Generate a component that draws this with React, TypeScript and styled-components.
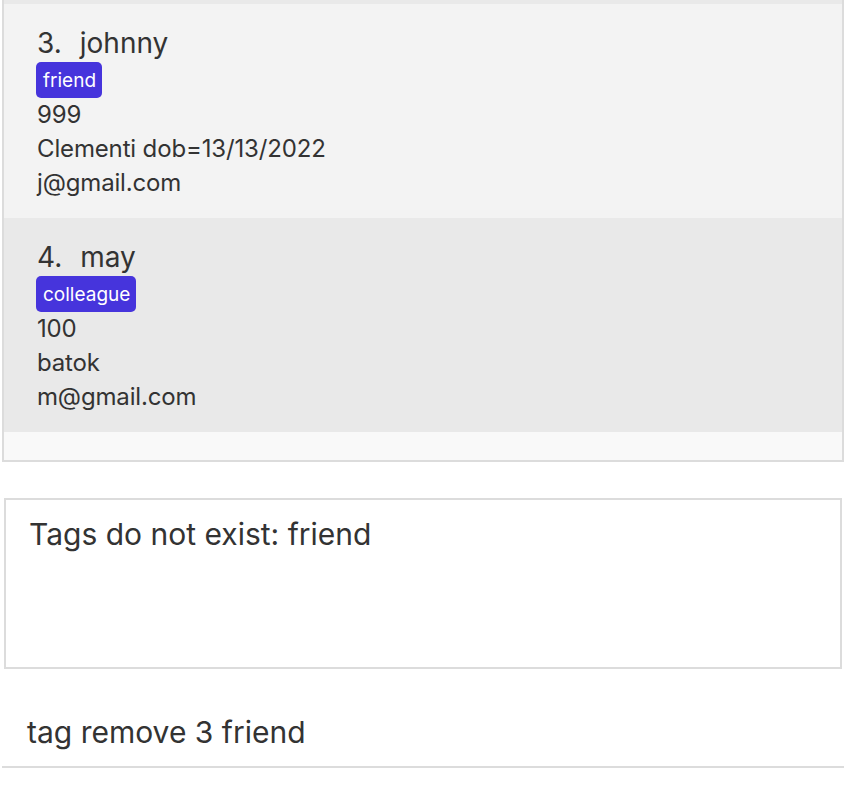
import React from "react";
import styled, { createGlobalStyle } from "styled-components";

const Global = createGlobalStyle`
  html, body { margin: 0; padding: 0; background: #ffffff; }
  body { font-family: Inter, "Noto Sans", sans-serif; color: #333333; }
`;

const Page = styled.div`
  width: 856px;
  height: 790px;
  display: flex;
  flex-direction: column;
  background: #ffffff;
`;

const ListPanel = styled.div`
  margin-left: 2px;
  width: 842px;
  height: 462px;
  box-sizing: border-box;
  border: 2px solid #dcdcdc;
  border-top: none;
  background: #f9f9f9;
  overflow: hidden;
  display: flex;
  flex-direction: column;
`;

const CardTail = styled.div`
  height: 4px;
  flex: none;
  background: #e9e9e9;
`;

const Card = styled.div<{ $odd: boolean }>`
  height: 214px;
  flex: none;
  box-sizing: border-box;
  padding: 22px 0 0 33px;
  background: ${(p) => (p.$odd ? "#f3f3f3" : "#e9e9e9")};
  display: flex;
  flex-direction: column;
  align-items: flex-start;
`;

const NameRow = styled.div`
  display: flex;
  gap: 18px;
  font-size: 28px;
  line-height: 34px;
  color: #333333;
`;

const Tags = styled.div`
  display: flex;
  gap: 6px;
  margin: 2px 0 0 -1px;
`;

const Tag = styled.span`
  background: #4634dc;
  color: #ffffff;
  font-size: 19px;
  line-height: 36px;
  height: 36px;
  padding: 1px 6px 0 7px;
  box-sizing: border-box;
  border-radius: 5px;
`;

const Detail = styled.div`
  font-size: 24px;
  line-height: 34px;
  letter-spacing: -0.15px;
  color: #333333;
`;

const ResultBox = styled.div`
  margin: 36px 0 0 4px;
  width: 838px;
  height: 171px;
  box-sizing: border-box;
  border: 2px solid #dcdcdc;
  background: #ffffff;
  padding: 14px 0 0 23px;
  font-size: 30px;
  line-height: 40px;
  color: #333333;
`;

const CommandBox = styled.div`
  margin: 36px 0 0 2px;
  width: 842px;
  height: 63px;
  box-sizing: border-box;
  border-bottom: 2px solid #dcdcdc;
  padding: 7px 0 0 25px;
  font-size: 30px;
  line-height: 40px;
  color: #333333;
`;

type Person = {
  id: number;
  name: string;
  tags: string[];
  phone: string;
  address: string;
  email: string;
};

const people: Person[] = [
  { id: 3, name: "johnny", tags: ["friend"], phone: "999", address: "Clementi dob=13/13/2022", email: "j@gmail.com" },
  { id: 4, name: "may", tags: ["colleague"], phone: "100", address: "batok", email: "m@gmail.com" },
];

export default function App() {
  return (
    <>
      <Global />
      <Page>
        <ListPanel>
          <CardTail />
          {people.map((p) => (
            <Card key={p.id} $odd={p.id % 2 === 1}>
              <NameRow>
                <span>{p.id}.</span>
                <span>{p.name}</span>
              </NameRow>
              <Tags>
                {p.tags.map((t) => (
                  <Tag key={t}>{t}</Tag>
                ))}
              </Tags>
              <Detail>{p.phone}</Detail>
              <Detail>{p.address}</Detail>
              <Detail>{p.email}</Detail>
            </Card>
          ))}
        </ListPanel>
        <ResultBox>Tags do not exist: friend</ResultBox>
        <CommandBox>tag remove 3 friend</CommandBox>
      </Page>
    </>
  );
}
